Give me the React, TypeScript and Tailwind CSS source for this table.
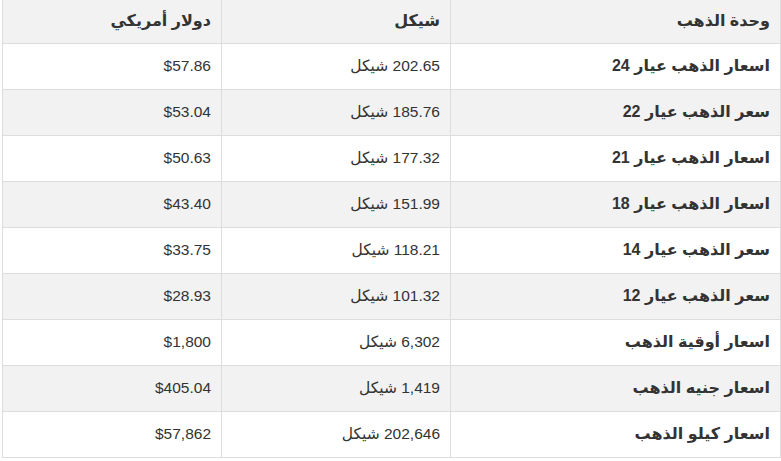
import React from "react";

const rows: [string, string, string][] = [
  ["اسعار الذهب عيار 24", "202.65 شيكل", "$57.86"],
  ["سعر الذهب عيار 22", "185.76 شيكل", "$53.04"],
  ["اسعار الذهب عيار 21", "177.32 شيكل", "$50.63"],
  ["اسعار الذهب عيار 18", "151.99 شيكل", "$43.40"],
  ["سعر الذهب عيار 14", "118.21 شيكل", "$33.75"],
  ["سعر الذهب عيار 12", "101.32 شيكل", "$28.93"],
  ["اسعار أوقية الذهب", "6,302 شيكل", "$1,800"],
  ["اسعار جنيه الذهب", "1,419 شيكل", "$405.04"],
  ["اسعار كيلو الذهب", "202,646 شيكل", "$57,862"],
];

export default function App() {
  return (
    <div
      className="bg-white w-[781px] h-[461px] pl-[2px] text-[#333]"
      style={{ fontFamily: '"Liberation Sans", "DejaVu Sans", Arial, sans-serif' }}
    >
      <table dir="rtl" className="w-[778px] border-collapse table-fixed">
        <colgroup>
          <col className="w-[330px]" />
          <col className="w-[229px]" />
          <col className="w-[219px]" />
        </colgroup>
        <thead>
          <tr className="bg-[#f2f2f2] h-[43px]">
            <th className="border border-[#dddddd] border-t-0 text-right pr-[10px] font-bold text-[16px] leading-none">وحدة الذهب</th>
            <th className="border border-[#dddddd] border-t-0 text-right pr-[10px] font-bold text-[16px] leading-none">شيكل</th>
            <th className="border border-[#dddddd] border-t-0 text-right pr-[10px] font-bold text-[16px] leading-none">دولار أمريكي</th>
          </tr>
        </thead>
        <tbody>
          {rows.map((r, i) => (
            <tr key={i} className={`h-[46px] ${i % 2 === 1 ? "bg-[#f2f2f2]" : "bg-white"}`}>
              <td className="border border-[#dddddd] text-right pr-[10px] font-bold text-[16px] leading-none">{r[0]}</td>
              <td className="border border-[#dddddd] text-right pr-[10px] text-[15.5px] leading-none">{r[1]}</td>
              <td className="border border-[#dddddd] text-right pr-[10px] text-[15.5px] leading-none">{r[2]}</td>
            </tr>
          ))}
        </tbody>
      </table>
    </div>
  );
}
